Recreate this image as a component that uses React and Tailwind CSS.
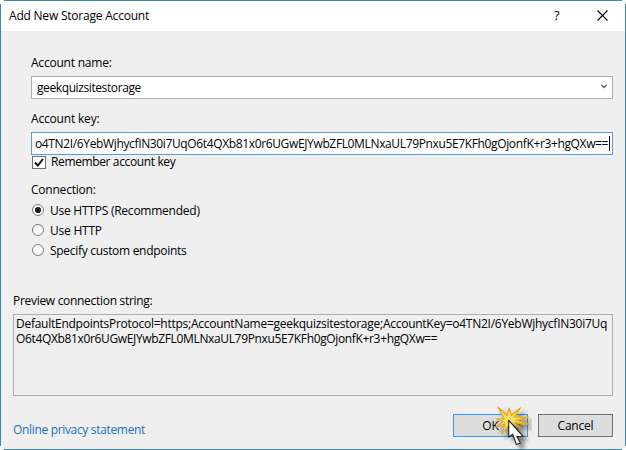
function Radio({ label, checked, tracking }) {
  return (
    <label className="flex h-5 items-center">
      <svg className="ml-px mb-px h-3 w-3 shrink-0" viewBox="0 0 12 12">
        <circle cx="6" cy="6" r="5.5" fill="#fff" stroke="#707070" strokeWidth="0.95" />
        {checked && <circle cx="6" cy="6" r="3.1" fill="#212121" />}
      </svg>
      <span className={`ml-[6px] mt-px leading-4 ${tracking}`}>{label}</span>
    </label>
  );
}

function ClickCursor() {
  return (
    <svg className="pointer-events-none absolute left-[490px] top-[402px] h-[48px] w-[42px]" viewBox="0 0 42 48">
      <defs>
        <filter id="shade" x="-40%" y="-40%" width="190%" height="190%">
          <feDropShadow dx="4" dy="4" stdDeviation="2" floodColor="#000" floodOpacity="0.5" />
        </filter>
      </defs>
      <g filter="url(#shade)">
        <path
          d="M8 5.2 L17 13.5 L19.2 6 L21.3 13.3 L30.5 5.8 L24.5 14.8 L38.5 15.3 L26 18.3 L39.3 22.3 L25 20.8 L30 26 L20 21.5 L11.8 32.3 L15 22 L5.5 25.5 L13 19.3 L6 17 L14 16.8 Z"
          fill="#f8dc62" stroke="#e3a81a" strokeWidth="1.2" strokeLinejoin="round"
        />
      </g>
      <path
        d="M18.7 18.3 L18.7 35 L22.7 32.2 L26.4 42.6 L30.4 41 L26.8 34.6 L32.8 34.2 Z"
        fill="#fff" stroke="#222" strokeWidth="1.1" strokeLinejoin="round" filter="url(#shade)"
      />
    </svg>
  );
}

export default function App() {
  return (
    <div className="relative flex h-[450px] w-[626px] flex-col bg-[#efefef] font-['Open_Sans',sans-serif] text-[12px] leading-[18px] whitespace-nowrap text-black">
      <header className="flex h-[31px] shrink-0 items-start bg-white pl-[9px] pt-[7px]">
        <h1 className="grow tracking-[-0.21px]">Add New Storage Account</h1>
        <span className="w-[43px] text-[13px] leading-4 font-medium">?</span>
        <svg className="mr-[18px] mt-[3px] h-[11px] w-[11px]" viewBox="0 0 11 11">
          <path d="M0.5 0.5 L10.5 10.5 M10.5 0.5 L0.5 10.5" stroke="#000" strokeWidth="1.1" />
        </svg>
      </header>

      <main className="flex h-[229px] shrink-0 flex-col pl-[31px] pr-[13px] pt-[23px]">
        <div className="h-[22px] tracking-[-0.22px]">Account name:</div>
        <div className="flex h-[23px] items-center border border-[#abadb3] bg-white pl-[5px] pr-[5px]">
          <span className="grow tracking-[-0.4px]">geekquizsitestorage</span>
          <svg className="mb-[3px] h-[5px] w-[6px]" viewBox="0 0 6 5">
            <path d="M0.4 0.8 L3 3.5 L5.6 0.8" fill="none" stroke="#606060" strokeWidth="1.4" />
          </svg>
        </div>
        <div className="mt-[11px] h-[22px] tracking-[-0.18px]">Account key:</div>
        <div className="flex h-[23px] shrink-0 items-center border border-[#569de5] bg-white pl-[3px]">
          <span className="mt-px w-[574px] tracking-[-0.36px]">o4TN2I/6YebWjhycfIN30i7UqO6t4QXb81x0r6UGwEJYwbZFL0MLNxaUL79Pnxu5E7KFh0gOjonfK+r3+hgQXw==</span>
          <span className="h-[15px] w-px bg-black" />
        </div>
        <div className="flex h-[26px] shrink-0">
          <svg className="ml-px mt-[1px] h-[13px] w-[14px]" viewBox="0 0 14 13">
            <rect x="0.5" y="0.5" width="13" height="12" fill="#fff" stroke="#707070" />
            <path d="M3 6.5 L5.8 9.5 L11 3" fill="none" stroke="#111" strokeWidth="2" />
          </svg>
          <span className="ml-[5px] mt-[-2px] tracking-[-0.37px]">Remember account key</span>
        </div>
        <div className="h-[19px] shrink-0 tracking-[-0.22px]">Connection:</div>
        <Radio label="Use HTTPS (Recommended)" checked tracking="tracking-[-0.24px]" />
        <Radio label="Use HTTP" tracking="tracking-[-0.23px]" />
        <Radio label="Specify custom endpoints" tracking="tracking-[-0.3px]" />
      </main>

      <section className="flex h-[136px] shrink-0 flex-col px-[13px] pt-8">
        <div className="h-[22px] tracking-[-0.3px]">Preview connection string:</div>
        <div className="h-[82px] border border-[#abadb3] pt-px pl-[2px] leading-[15px]">
          <div className="tracking-[-0.26px]">DefaultEndpointsProtocol=https;AccountName=geekquizsitestorage;AccountKey=o4TN2I/6YebWjhycfIN30i7Uq</div>
          <div className="tracking-[-0.35px]">O6t4QXb81x0r6UGwEJYwbZFL0MLNxaUL79Pnxu5E7KFh0gOjonfK+r3+hgQXw==</div>
        </div>
      </section>

      <footer className="flex items-start px-[13px] pt-[18px]">
        <a className="mt-[7px] grow tracking-[-0.33px] text-[#1970c5]">Online privacy statement</a>
        <button className="h-[23px] w-[75px] border border-[#3399ff] bg-[#dddddd] pt-px">OK</button>
        <button className="ml-[10px] h-[23px] w-[75px] border border-[#707070] bg-[#dddddd] pt-px tracking-[-0.2px]">Cancel</button>
      </footer>

      <svg className="pointer-events-none absolute inset-0 h-[450px] w-[626px]" viewBox="0 0 626 450" shapeRendering="crispEdges">
        <path d="M0 0 H4 V1 H1 V4 H0 Z M622 0 H626 V4 H625 V1 H622 Z M0 446 H1 V448 H4 V450 H0 Z M626 446 H625 V448 H622 V450 H626 Z" fill="#fff" />
        <path d="M4 0.5 H622 M4 449.5 H622 M0.5 4 V446 M625.5 4 V446" stroke="#3f87a6" />
      </svg>
      <ClickCursor />
    </div>
  );
}
